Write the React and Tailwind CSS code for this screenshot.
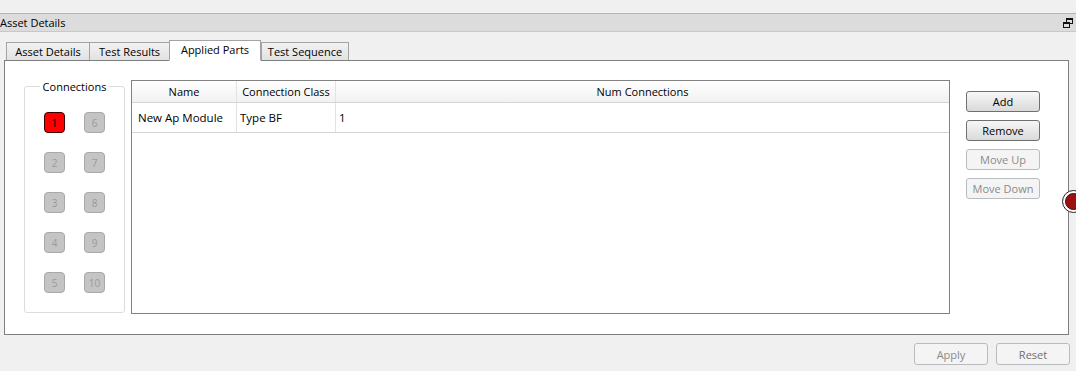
import React from "react";

const tabs = [
  { label: "Asset Details", w: "w-[84px]" },
  { label: "Test Results", w: "w-[81px]" },
  { label: "Applied Parts", w: "w-[92px]", active: true },
  { label: "Test Sequence", w: "w-[88px]" },
];

const ConnBtn = ({ n, active }) => (
  <div
    className={
      active
        ? "w-[21px] h-[21px] rounded-[4px] border border-[#3a0000] bg-[#ff0000] text-black text-[11px] leading-none flex items-center justify-center"
        : "w-[21px] h-[21px] rounded-[4px] border border-[#a9a9a9] bg-[#c4c4c4] text-[#9a9a9a] text-[10px] leading-none flex items-center justify-center"
    }
  >
    {n}
  </div>
);

const SideBtn = ({ label, disabled }) => (
  <button
    className={
      disabled
        ? "w-[74px] h-[21px] rounded-[3px] border border-[#b9bcbe] bg-[#f4f4f4] text-[#8a8a8a] text-[11px] leading-none pb-[1px]"
        : "w-[74px] h-[21px] rounded-[3px] border border-[#707070] bg-gradient-to-b from-[#f7f7f7] to-[#dadada] text-black text-[11px] leading-none pb-[1px]"
    }
  >
    {label}
  </button>
);

export default function App() {
  return (
    <div className="relative w-[1076px] h-[371px] bg-[#f0f0f0] overflow-hidden text-[11px] text-black font-['Open_Sans','Liberation_Sans',Arial,sans-serif]">
      {/* dock title */}
      <div className="mt-[13px] h-[19px] border-t border-[#b4b4b4] border-b border-b-[#c8c8c8] bg-[#dcdcdc] flex items-center justify-between pr-[3px]">
        <span className="leading-none">Asset Details</span>
        <svg width="10" height="10" viewBox="0 0 10 10">
          <rect x="3.5" y="0.5" width="6" height="5" fill="none" stroke="#111" />
          <rect x="3.5" y="0.5" width="6" height="1.5" fill="#111" />
          <rect x="0.5" y="4.5" width="6" height="5" fill="#dcdcdc" stroke="#111" />
          <rect x="0.5" y="4.5" width="6" height="1.5" fill="#111" />
        </svg>
      </div>

      {/* tabs */}
      <div className="mt-[8px] pl-[6px] flex items-end h-[20px]">
        {tabs.map((t) =>
          t.active ? (
            <div
              key={t.label}
              className={`${t.w} h-[21px] -mb-px z-10 bg-white border border-[#a3a3a3] border-b-white flex items-center justify-center leading-none pb-[2px]`}
            >
              {t.label}
            </div>
          ) : (
            <div
              key={t.label}
              className={`${t.w} h-[18px] bg-gradient-to-b from-[#f2f2f2] to-[#e2e2e2] border border-[#a3a3a3] border-b-0 -mr-px flex items-center justify-center leading-none`}
            >
              {t.label}
            </div>
          )
        )}
      </div>

      {/* tab page */}
      <div className="ml-[4px] w-[1065px] h-[275px] bg-white border border-[#7f7f7f] flex">
        {/* connections group */}
        <div className="ml-[19px] mt-[25px] w-[101px] h-[227px] border border-[#dcdcdc] rounded-[3px] relative">
          <div className="absolute -top-[7px] left-0 right-0 flex justify-center">
            <span className="bg-white px-[3px] leading-[13px]">Connections</span>
          </div>
          <div className="mt-[25px] ml-[19px] grid grid-cols-[21px_21px] gap-x-[19px] gap-y-[19px]">
            {[1, 6, 2, 7, 3, 8, 4, 9, 5, 10].map((n) => (
              <ConnBtn key={n} n={n} active={n === 1} />
            ))}
          </div>
        </div>

        {/* table */}
        <div className="ml-[6px] mt-[19px] w-[819px] h-[234px] border border-[#828282] bg-white flex flex-col">
          <div className="h-[22px] flex border-b border-[#d5d5d5] bg-gradient-to-b from-white to-[#f1f1f1] leading-none">
            <div className="w-[105px] border-r border-[#e2e2e2] flex items-center justify-center">Name</div>
            <div className="w-[99px] border-r border-[#e2e2e2] flex items-center justify-center">Connection Class</div>
            <div className="flex-1 flex items-center justify-center">Num Connections</div>
          </div>
          <div className="h-[30px] flex border-b border-[#d5d5d5] text-[11.5px] leading-none">
            <div className="w-[105px] border-r border-[#e2e2e2] flex items-center pl-[6px] whitespace-nowrap">New Ap Module</div>
            <div className="w-[99px] border-r border-[#e2e2e2] flex items-center pl-[3px]">Type BF</div>
            <div className="flex-1 flex items-center pl-[3px]">1</div>
          </div>
        </div>

        {/* side buttons */}
        <div className="ml-[16px] mt-[30px] flex flex-col gap-[8px]">
          <SideBtn label="Add" />
          <SideBtn label="Remove" />
          <SideBtn label="Move Up" disabled />
          <SideBtn label="Move Down" disabled />
        </div>
      </div>

      {/* bottom buttons */}
      <div className="mt-[8px] flex justify-end gap-[8px] pr-[6px]">
        <button className="w-[74px] h-[22px] rounded-[3px] border border-[#b9bcbe] bg-[#f4f4f4] text-[#8a8a8a] leading-none">Apply</button>
        <button className="w-[74px] h-[22px] rounded-[3px] border border-[#b9bcbe] bg-[#f4f4f4] text-[#6f6f6f] leading-none">Reset</button>
      </div>

      {/* status light overlapping edge */}
      <div className="absolute left-[1062px] top-[190px] w-[23px] h-[23px] rounded-full bg-white border border-[#222] flex items-center justify-center">
        <div className="w-[17px] h-[17px] rounded-full bg-[#9c1010] border border-[#5a0000]" />
      </div>
    </div>
  );
}
